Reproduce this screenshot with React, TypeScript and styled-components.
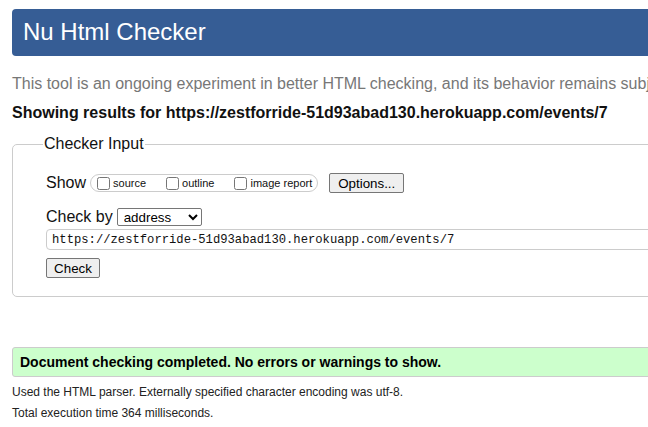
import React from 'react';
import styled, { createGlobalStyle } from 'styled-components';

const GlobalStyle = createGlobalStyle`
    html, body {
        margin: 0;
        padding: 0;
        background: #fff;
        overflow: hidden;
    }
    body {
        font-family: "Liberation Sans", Arial, sans-serif;
        color: #000;
    }
`;

const Page = styled.div`
    width: 1000px;
    padding: 9px 0 0 12px;
`;

const Header = styled.h1`
    margin: 0;
    height: 47px;
    line-height: 45px;
    padding-left: 11px;
    background: #365d95;
    border-radius: 4px 0 0 4px;
    color: #fff;
    font-size: 24px;
    font-weight: 400;
`;

const Intro = styled.p`
    margin: 18px 0 0;
    font-size: 16px;
    line-height: 20px;
    color: #777;
    white-space: nowrap;
`;

const ResultsFor = styled.p`
    margin: 9px 0 0;
    font-size: 16px;
    line-height: 20px;
    font-weight: 700;
    color: #111;
    white-space: nowrap;
`;

const CheckerForm = styled.fieldset`
    margin: 11px 0 0;
    padding: 0 0 18px 33px;
    border: 1px solid #ccc;
    border-radius: 5px;
    min-width: 0;
`;

const Legend = styled.legend`
    margin-left: -3px;
    padding: 0 1px;
    font-size: 16px;
    line-height: 20px;
    color: #111;
`;

const Row = styled.div<{ $top: number }>`
    display: flex;
    align-items: center;
    margin-top: ${(p) => p.$top}px;
    font-size: 16px;
    color: #111;
`;

const OptionGroup = styled.div`
    display: flex;
    align-items: center;
    gap: 20px;
    height: 16px;
    margin-left: 4px;
    padding: 0 5px 0 6px;
    border: 1px solid #ccc;
    border-radius: 9px;
`;

const CheckLabel = styled.label`
    display: flex;
    align-items: center;
    gap: 3px;
    font-size: 11px;
    color: #111;

    input {
        margin: 0;
        width: 13px;
        height: 13px;
    }
`;

const Button = styled.button<{ $w: number }>`
    box-sizing: border-box;
    width: ${(p) => p.$w}px;
    height: 20px;
    padding: 0;
    font-family: "Liberation Sans", Arial, sans-serif;
    font-size: 13.33px;
    color: #000;
    background: #efefef;
    border: 1px solid #767676;
    border-radius: 2px;
`;

const OptionsButton = styled(Button)`
    margin-left: 11px;
`;

const Select = styled.select`
    box-sizing: border-box;
    width: 85px;
    height: 18px;
    margin-left: 4px;
    padding: 0 0 0 2px;
    font-family: "Liberation Sans", Arial, sans-serif;
    font-size: 13.33px;
    color: #000;
    background: #fff;
    border: 1px solid #767676;
    border-radius: 2px;
`;

const UrlInput = styled.input`
    display: block;
    box-sizing: border-box;
    width: 900px;
    height: 21px;
    margin-top: 3px;
    padding: 0 5px;
    font-family: "Liberation Mono", "DejaVu Sans Mono", monospace;
    font-size: 12.2px;
    color: #111;
    border: 1px solid #ccc;
    border-radius: 4px;
`;

const CheckButton = styled(Button)`
    display: block;
    margin-top: 8px;
`;

const Success = styled.p`
    box-sizing: border-box;
    height: 30px;
    margin: 50px 0 0;
    padding-left: 7px;
    line-height: 28px;
    background: #ccffcc;
    border: 1px solid #ccc;
    border-radius: 3px 0 0 3px;
    font-size: 14px;
    font-weight: 700;
    white-space: nowrap;
`;

const Details = styled.div`
    margin-top: 5px;
`;

const Note = styled.p`
    margin: 0;
    font-size: 12px;
    line-height: 21px;
    color: #222;
`;

const App: React.FC = () => (
    <>
        <GlobalStyle />
        <Page>
            <Header>Nu Html Checker</Header>
            <Intro>
                This tool is an ongoing experiment in better HTML checking, and its behavior remains subject to change
            </Intro>
            <ResultsFor>Showing results for https://zestforride-51d93abad130.herokuapp.com/events/7</ResultsFor>
            <CheckerForm>
                <Legend>Checker Input</Legend>
                <Row $top={19}>
                    Show
                    <OptionGroup>
                        <CheckLabel>
                            <input type="checkbox" /> source
                        </CheckLabel>
                        <CheckLabel>
                            <input type="checkbox" /> outline
                        </CheckLabel>
                        <CheckLabel>
                            <input type="checkbox" /> image report
                        </CheckLabel>
                    </OptionGroup>
                    <OptionsButton $w={75}>Options...</OptionsButton>
                </Row>
                <Row $top={15}>
                    Check by
                    <Select defaultValue="address">
                        <option value="address">address</option>
                        <option value="file">file upload</option>
                        <option value="text">text input</option>
                    </Select>
                </Row>
                <UrlInput readOnly value="https://zestforride-51d93abad130.herokuapp.com/events/7" />
                <CheckButton $w={54}>Check</CheckButton>
            </CheckerForm>
            <Success>Document checking completed. No errors or warnings to show.</Success>
            <Details>
                <Note>Used the HTML parser. Externally specified character encoding was utf-8.</Note>
                <Note>Total execution time 364 milliseconds.</Note>
            </Details>
        </Page>
    </>
);

export default App;
